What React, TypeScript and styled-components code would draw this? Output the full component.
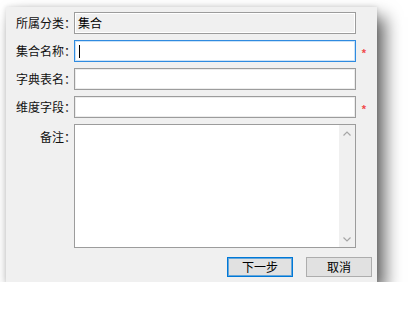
import React from "react";
import styled, { createGlobalStyle } from "styled-components";

const GlobalStyle = createGlobalStyle`
  html, body {
    margin: 0;
    padding: 0;
    background: #ffffff;
  }
  body {
    font-family: "Noto Sans CJK SC", "Noto Sans", sans-serif;
    font-size: 12px;
    color: #000;
  }
`;

const Page = styled.div`
  padding: 7px 0 0 6px;
`;

const Dialog = styled.div`
  box-sizing: border-box;
  width: 371px;
  height: 275px;
  display: flex;
  flex-flow: column;
  padding: 5px 5px 5px 0;
  background: #f0f0f0;
  box-shadow: 8px 10px 16px rgba(0, 0, 0, 0.6), 0 0 5px rgba(0, 0, 0, 0.14);
`;

const Form = styled.div`
  display: grid;
  grid-template-columns: 68px 282px 1fr;
  grid-template-rows: 22px 22px 22px 22px 124px;
  row-gap: 6px;
`;

const Label = styled.div<{ $top?: boolean }>`
  margin-right: -2px;
  display: flex;
  align-items: ${(p) => (p.$top ? "flex-start" : "center")};
  justify-content: flex-end;
  padding-top: ${(p) => (p.$top ? "5px" : "0")};
  line-height: 16px;
  white-space: nowrap;
  color: #111;
`;

const Field = styled.div<{ $focused?: boolean; $disabled?: boolean }>`
  box-sizing: border-box;
  display: flex;
  align-items: center;
  padding-left: 3px;
  line-height: 16px;
  background: ${(p) => (p.$disabled ? "#f0f0f0" : "#ffffff")};
  border: 1px solid ${(p) => (p.$focused ? "#2f8be0" : "#9c9c9c")};
  box-shadow: ${(p) =>
    p.$disabled
      ? "inset 0 0 0 1px #ffffff"
      : p.$focused
        ? "inset 0 0 0 1px rgba(47,139,224,0.25)"
        : "inset 0 0 0 1px rgba(160,160,160,0.2)"};
`;

const Caret = styled.span`
  display: inline-block;
  width: 1px;
  height: 13px;
  margin-left: 1px;
  background: #000;
`;

const Required = styled.div`
  display: flex;
  align-items: center;
  justify-content: center;
  color: #f04848;
  font-size: 11px;
  font-family: "Liberation Sans", sans-serif;
  font-weight: bold;
  padding-top: 3px;
`;

const Memo = styled.div`
  box-sizing: border-box;
  display: flex;
  background: #ffffff;
  border: 1px solid #9c9c9c;
`;

const MemoText = styled.div`
  flex: 1;
`;

const ScrollTrack = styled.div`
  width: 16px;
  display: flex;
  flex-flow: column;
  justify-content: space-between;
  align-items: center;
  padding: 6px 0 5px;
  background: #f0f0f0;
`;

const Footer = styled.div`
  display: flex;
  justify-content: flex-end;
  gap: 13px;
  margin-top: 9px;
`;

const Button = styled.div<{ $primary?: boolean }>`
  box-sizing: border-box;
  width: 66px;
  height: 20px;
  display: flex;
  align-items: center;
  justify-content: center;
  line-height: 16px;
  background: #e1e1e1;
  border: 1px solid ${(p) => (p.$primary ? "#0078d7" : "#adadad")};
  box-shadow: ${(p) => (p.$primary ? "inset 0 0 0 1px rgba(0,120,215,0.55)" : "none")};
`;

const Chevron = ({ up }: { up?: boolean }) => (
  <svg width="8" height="5" viewBox="0 0 8 5">
    <path
      d={up ? "M0.5 4.5 L4 1 L7.5 4.5" : "M0.5 0.5 L4 4 L7.5 0.5"}
      fill="none"
      stroke="#a6a6a6"
      strokeWidth="1.2"
    />
  </svg>
);

export default function App() {
  return (
    <Page>
      <GlobalStyle />
      <Dialog>
        <Form>
          <Label>所属分类：</Label>
          <Field $disabled>集合</Field>
          <div />

          <Label>集合名称：</Label>
          <Field $focused>
            <Caret />
          </Field>
          <Required>*</Required>

          <Label>字典表名：</Label>
          <Field />
          <div />

          <Label>维度字段：</Label>
          <Field />
          <Required>*</Required>

          <Label $top>备注：</Label>
          <Memo>
            <MemoText />
            <ScrollTrack>
              <Chevron up />
              <Chevron />
            </ScrollTrack>
          </Memo>
          <div />
        </Form>
        <Footer>
          <Button $primary>下一步</Button>
          <Button>取消</Button>
        </Footer>
      </Dialog>
    </Page>
  );
}
